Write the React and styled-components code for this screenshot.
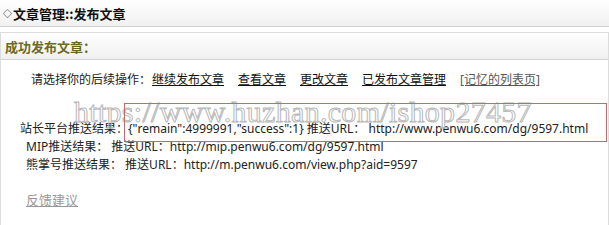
import styled, { createGlobalStyle } from "styled-components";

const Global = createGlobalStyle`
  body { margin: 0; background: #fff; }
  * { box-sizing: border-box; }
`

const Page = styled.div`
  position: relative;
  width: 609px;
  height: 225px;
  overflow: hidden;
  font-family: "Noto Sans", "Noto Sans CJK SC", sans-serif;
  font-size: 12px;
  color: #222;
`

const TitleBar = styled.div`
  height: 27px;
  padding-left: 3px;
  display: flex;
  align-items: center;
  background: linear-gradient(#ffffff, #f0f0f0);
  border-bottom: 1px solid #d2d2d2;
  font-family: "Noto Sans CJK SC", sans-serif;
  font-weight: bold;
  font-size: 13px;
  color: #111;
`

const Diamond = styled.span`
  font-size: 9px;
  font-weight: normal;
  margin-right: 1px;
`

const Panel = styled.div`
  margin-top: 5px;
  height: 200px;
  border: 1px solid #dcdcdc;
  border-bottom: none;
`

const PanelHead = styled.div`
  height: 27px;
  padding-left: 4px;
  display: flex;
  align-items: center;
  background: linear-gradient(#ffffff, #f0f0f0);
  border-bottom: 1px solid #d2d2d2;
  font-family: "Noto Sans CJK SC", sans-serif;
  font-weight: bold;
  font-size: 13px;
  color: #6b6a1e;
`

const Body = styled.div`
  padding: 11px 0 0 0;
`

const Row = styled.div`
  height: 18px;
  line-height: 18px;
  white-space: nowrap;
  padding-left: ${p => p.indent}px;
  margin-top: ${p => p.gap || 0}px;
`

const Label = styled.span`
  margin-right: ${p => p.space || 0}px;
`

const A = styled.a`
  color: ${p => (p.muted ? "#555" : "#111")};
  text-decoration: underline;
  margin-right: 14px;
`

const Feedback = styled.a`
  color: #999;
  text-decoration: underline;
  font-size: 13px;
`

const Watermark = styled.div`
  position: absolute;
  left: 74px;
  top: 95px;
  font-family: "Liberation Serif", serif;
  font-size: 30px;
  letter-spacing: 0.3px;
  color: transparent;
  -webkit-text-stroke: 1px #b8b8b8;
  white-space: nowrap;
  pointer-events: none;
`

const RedBox = styled.div`
  position: absolute;
  left: 124px;
  top: 103px;
  width: 483px;
  height: 39px;
  border: 1px solid #c46a6a;
  pointer-events: none;
`

export default function App() {
  return (
    <Page>
      <Global />
      <TitleBar>
        <Diamond>◇</Diamond>文章管理::发布文章
      </TitleBar>
      <Panel>
        <PanelHead>成功发布文章：</PanelHead>
        <Body>
          <Row indent={30}>
            <Label space={1}>请选择你的后续操作：</Label>
            <A href="#">继续发布文章</A>
            <A href="#">查看文章</A>
            <A href="#">更改文章</A>
            <A href="#">已发布文章管理</A>
            <A href="#" muted>[记忆的列表页]</A>
          </Row>
          <Row indent={19} gap={31}>
            站长平台推送结果：{'{"remain":4999991,"success":1}'} 推送URL： http://www.penwu6.com/dg/9597.html
          </Row>
          <Row indent={25}>
            MIP推送结果： 推送URL：http://mip.penwu6.com/dg/9597.html
          </Row>
          <Row indent={25}>
            熊掌号推送结果： 推送URL：http://m.penwu6.com/view.php?aid=9597
          </Row>
          <Row indent={25} gap={17}>
            <Feedback href="#">反馈建议</Feedback>
          </Row>
        </Body>
      </Panel>
      <Watermark>https://www.huzhan.com/ishop27457</Watermark>
      <RedBox />
    </Page>
  );
}
